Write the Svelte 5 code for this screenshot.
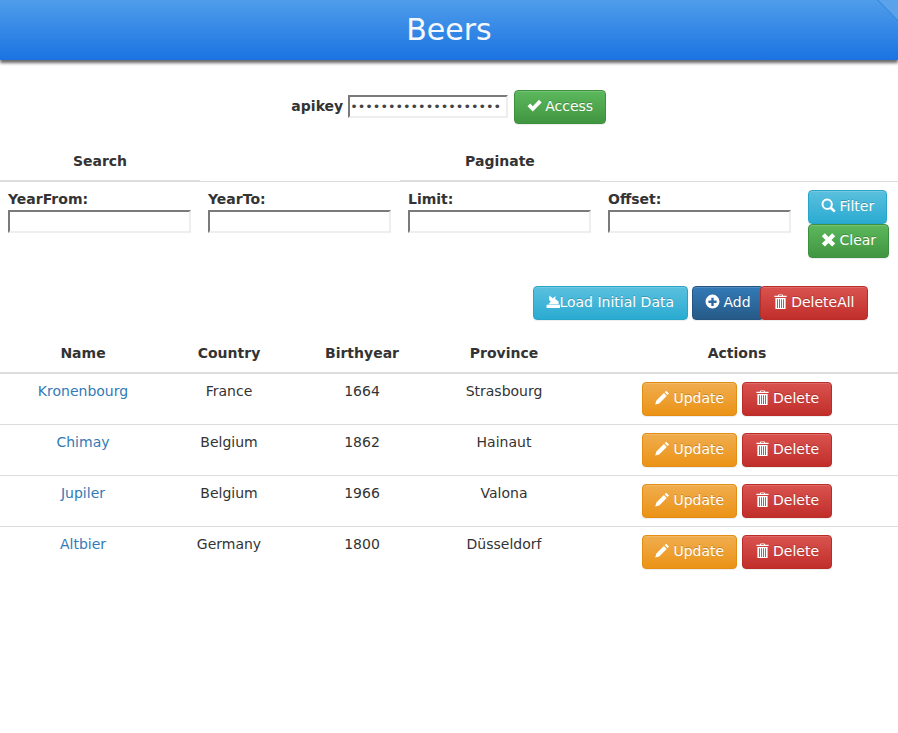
<script>
	const icons = {
		ok: 'M0.5 8.3 L3.2 5.6 L5.8 8.2 L12 1.8 L14.7 4.5 L5.8 13.6 Z',
		search: 'M6.2 0.6a5.6 5.6 0 1 0 3 10.3l3.7 3.7 1.8-1.9-3.7-3.6A5.6 5.6 0 0 0 6.2 0.6zm0 1.9a3.7 3.7 0 1 1 0 7.4 3.7 3.7 0 0 1 0-7.4z',
		remove: 'M0.8 4.2 L3.8 1.2 L7.5 4.9 L11.2 1.2 L14.2 4.2 L10.5 7.9 L14.2 11.6 L11.2 14.6 L7.5 10.9 L3.8 14.6 L0.8 11.6 L4.5 7.9 Z',
		plus: 'M7.5 0.6a7 7 0 1 0 0 14 7 7 0 0 0 0-14zM6.3 3.7h2.4v2.9h2.9V9H8.7v2.9H6.3V9H3.4V6.6h2.9z',
		trash: 'M5.4 0.4h4.2l.6 1.3h3.4v1.4H1.4V1.7h3.4zM6.2 1.1l-.2.6h3l-.2-.6zM2.4 3.9h10.2V15H2.4zM4 5.2V13.9h.9V5.2zM6 5.2V13.9h.9V5.2zM8.1 5.2V13.9h.9V5.2zM10.1 5.2V13.9h.9V5.2z',
		pencil: 'M11.2 0.8 L14 3.6 L12.5 5.1 L9.7 2.3 Z M8.9 3.1 L11.7 5.9 L4.2 13.4 L0.2 14.6 L1.4 10.6 Z',
		load: 'M0.6 10.8h13.4V14H0.6zM2.4 10.2 L4.8 7.8 L3.2 6 L3.2 1.4 L6.8 4.2 L9.6 2 L9.2 5 L12.6 7.6 L12.6 10.2 Z'
	};
	const filters = [
		{ label: 'YearFrom:' },
		{ label: 'YearTo:' },
		{ label: 'Limit:' },
		{ label: 'Offset:' }
	];
	const beers = [
		{ name: 'Kronenbourg', country: 'France', year: 1664, province: 'Strasbourg' },
		{ name: 'Chimay', country: 'Belgium', year: 1862, province: 'Hainaut' },
		{ name: 'Jupiler', country: 'Belgium', year: 1966, province: 'Valona' },
		{ name: 'Altbier', country: 'Germany', year: 1800, province: 'Düsseldorf' }
	];
</script>

{#snippet icon(name)}
	<svg class="icon" viewBox="0 0 15 15" aria-hidden="true"><path d={icons[name]} fill="#fff" fill-rule="evenodd" /></svg>
{/snippet}

{#snippet btn(kind, name, label)}
	<button class="btn {kind} {name}-btn" type="button">{@render icon(name)}{label}</button>
{/snippet}

<header class="topbar">
	<h1>Beers</h1>
	<span class="fold"></span>
</header>

<form class="access">
	<label for="apikey">apikey</label>
	<input id="apikey" type="password" value="••••••••••••••••••••" />
	{@render btn('success', 'ok', 'Access')}
</form>

<section class="tabs">
	<div class="tab">Search</div>
	<div class="tab empty"></div>
	<div class="tab">Paginate</div>
</section>

<section class="filters">
	{#each filters as f}
		<div class="field">
			<label for={f.label}>{f.label}</label>
			<input id={f.label} type="text" />
		</div>
	{/each}
	<div class="filter-actions">
		{@render btn('info', 'search', 'Filter')}
		{@render btn('success', 'remove', 'Clear')}
	</div>
</section>

<div class="toolbar">
	{@render btn('info load-data', 'load', 'Load Initial Data')}
	{@render btn('primary', 'plus', 'Add')}
	{@render btn('danger', 'trash', 'DeleteAll')}
</div>

<table>
	<colgroup>
		<col class="c1" /><col class="c2" /><col class="c3" /><col class="c4" /><col />
	</colgroup>
	<thead>
		<tr>
			<th>Name</th>
			<th>Country</th>
			<th>Birthyear</th>
			<th>Province</th>
			<th>Actions</th>
		</tr>
	</thead>
	<tbody>
		{#each beers as b}
			<tr>
				<td><a href="#top">{b.name}</a></td>
				<td>{b.country}</td>
				<td>{b.year}</td>
				<td>{b.province}</td>
				<td class="row-actions">
					{@render btn('warning', 'pencil', 'Update')}
					{@render btn('danger', 'trash', 'Delete')}
				</td>
			</tr>
		{/each}
	</tbody>
</table>

<style>
	:global(body) {
		font-family: 'DejaVu Sans', sans-serif;
		font-size: 14px;
		line-height: 20px;
		color: #333;
		background: #fff;
	}
	* {
		box-sizing: border-box;
	}
	.topbar {
		position: relative;
		height: 60px;
		background: linear-gradient(#4f9dea, #1a73e2);
		box-shadow: 0 3px 3px rgba(0, 0, 0, 0.6);
	}
	h1 {
		margin: 0;
		font-size: 30px;
		font-weight: 400;
		line-height: 60px;
		text-align: center;
		color: #f4f8fd;
	}
	.fold {
		position: absolute;
		top: 0;
		right: 0;
		width: 21px;
		height: 21px;
		background: linear-gradient(to top right, transparent 49%, #3f8de2 49%, #3f8de2 53%, #5aa2ea 53%);
	}
	.access {
		display: flex;
		align-items: center;
		justify-content: center;
		height: 34px;
		margin-top: 30px;
		padding-right: 0.5px;
	}
	.access label {
		margin: 0 5px 2px 0;
		font-weight: 700;
	}
	.access input {
		width: 160px;
		height: 23px;
		margin: 0 6px 2px 0;
		padding-left: 0;
		font-size: 12.8px;
		color: #444;
	}
	.ok-btn .icon {
		margin-right: 3px;
	}
	input {
		padding: 1px 2px;
		font: 13.33px 'DejaVu Sans', sans-serif;
		color: #333;
		background: #fff;
		border: 2px solid;
		border-color: #7a7a7a #eee #eee #7a7a7a;
		outline: 0;
	}
	.tabs {
		display: flex;
		height: 41px;
		margin-top: 17px;
		border-bottom: 1px solid #ddd;
	}
	.tab {
		width: 200px;
		height: 41px;
		padding-top: 10px;
		font-weight: 700;
		text-align: center;
		border-bottom: 2px solid #ddd;
	}
	.tab.empty {
		border-bottom: 0;
	}
	.filters {
		display: flex;
		padding-top: 8px;
	}
	.field {
		width: 200px;
		padding: 0 8px;
	}
	.field label {
		display: block;
		margin: -1px 0 1px;
		font-weight: 700;
	}
	.field input {
		display: block;
		width: 183px;
		height: 23px;
	}
	.filter-actions {
		display: flex;
		flex-direction: column;
		align-items: flex-start;
		margin-left: 8px;
	}
	.btn {
		display: inline-flex;
		align-items: center;
		height: 34px;
		padding: 0 12px 2px;
		font: 14px/20px 'DejaVu Sans', sans-serif;
		color: #fff;
		text-shadow: 0 -1px 0 rgba(0, 0, 0, 0.2);
		white-space: nowrap;
		border: 1px solid transparent;
		border-radius: 4px;
		box-shadow: inset 0 1px 0 rgba(255, 255, 255, 0.15), 0 1px 1px rgba(0, 0, 0, 0.075);
	}
	.icon {
		flex: none;
		width: 15px;
		height: 15px;
		margin: -2px 3.5px 0 0;
	}
	.load-btn {
		padding-right: 13px;
	}
	.load-btn .icon {
		margin-right: -2px;
	}
	.success {
		background: linear-gradient(#5cb85c, #419641);
		border-color: #3e8f3e;
	}
	.info {
		background: linear-gradient(#5bc0de, #2aabd2);
		border-color: #28a4c9;
	}
	.primary {
		background: linear-gradient(#337ab7, #265a88);
		border-color: #245580;
	}
	.danger {
		background: linear-gradient(#d9534f, #c12e2a);
		border-color: #b92c28;
	}
	.warning {
		background: linear-gradient(#f0ad4e, #eb9316);
		border-color: #e38d13;
	}
	.toolbar {
		display: flex;
		justify-content: flex-end;
		margin-top: 28px;
		padding-right: 30px;
	}
	.toolbar .load-data {
		margin-right: 4px;
	}
	.toolbar .danger {
		margin-left: -4px;
		padding-right: 12.5px;
		position: relative;
	}
	table {
		width: 100%;
		margin-top: 15px;
		border-collapse: collapse;
		table-layout: fixed;
	}
	.c1 {
		width: 166px;
	}
	.c2 {
		width: 126px;
	}
	.c3 {
		width: 140px;
	}
	.c4 {
		width: 144px;
	}
	th,
	td {
		padding: 7px 8px 8px;
		text-align: center;
		vertical-align: top;
	}
	th {
		padding: 8px 8px 9px;
		border-bottom: 2px solid #ddd;
	}
	td {
		height: 51px;
		border-top: 1px solid #ddd;
	}
	tbody tr:first-child td {
		border-top: 0;
	}
	a {
		color: #337ab7;
		text-decoration: none;
	}
	.row-actions {
		padding-top: 8px;
		white-space: nowrap;
	}
</style>
